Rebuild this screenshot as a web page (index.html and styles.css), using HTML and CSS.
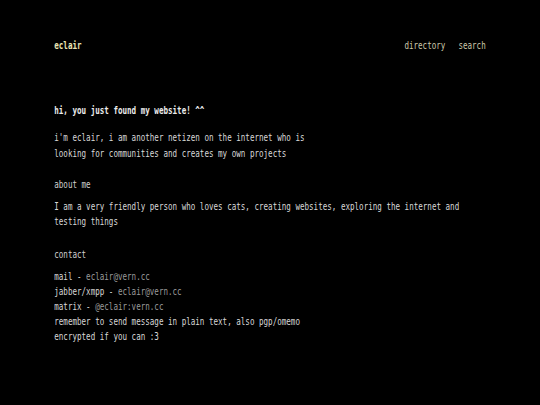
FILE: index.html
```html
<!DOCTYPE html>
<html lang="en">
<head>
<meta charset="utf-8">
<title>eclair</title>
<link rel="stylesheet" href="styles.css">
</head>
<body>
<div class="frame">
<div class="page">
  <header class="top">
    <span class="brand">eclair</span>
    <nav class="nav">
      <a href="#">directory</a>
      <a href="#">search</a>
    </nav>
  </header>
  <main class="main">
    <h1 class="title">hi, you just found my website! ^^</h1>
    <p class="intro">i'm eclair, i am another netizen on the internet who is looking for communities and creates my own projects</p>
    <h2 class="section">about me</h2>
    <p class="text">I am a very friendly person who loves cats, creating websites, exploring the internet and testing things</p>
    <h2 class="section section-contact">contact</h2>
    <div class="contact">
      <div>mail - <a href="#">eclair@vern.cc</a></div>
      <div>jabber/xmpp - <a href="#">eclair@vern.cc</a></div>
      <div>matrix - <a href="#">@eclair:vern.cc</a></div>
      <div>remember to send message in plain text, also pgp/omemo encrypted if you can :3</div>
    </div>
  </main>
</div>
</div>
</body>
</html>
```

FILE: styles.css
```css
html, body {
  margin: 0;
  padding: 0;
  background: #000;
  overflow: hidden;
}
.frame {
  width: 540px;
  height: 405px;
  overflow: hidden;
}
.page {
  width: 786px;
  box-sizing: border-box;
  padding: 38px 79px 0 79px;
  transform: scaleX(0.687);
  transform-origin: 0 0;
  font-family: "DejaVu Sans Mono", monospace;
  font-size: 11px;
  line-height: 15.2px;
  color: #d8d8d8;
}
.top {
  display: flex;
  justify-content: space-between;
  align-items: center;
}
.brand {
  color: #ebe6b4;
  font-weight: bold;
}
.nav {
  display: flex;
  gap: 19px;
}
.nav a {
  color: #cdc9aa;
  text-decoration: none;
}
.main {
  padding-top: 50px;
}
.title {
  margin: 0;
  font-size: 11px;
  line-height: 15.2px;
  font-weight: bold;
  color: #ececec;
}
.intro {
  margin: 12px 0 0 0;
  max-width: 60ch;
}
.section {
  margin: 16px 0 0 0;
  font-size: 11px;
  line-height: 15.2px;
  font-weight: normal;
  color: #d0d0d0;
}
.section-contact {
  margin-top: 18px;
}
.text {
  margin: 7px 0 0 0;
}
.contact {
  margin-top: 6px;
  max-width: 60ch;
}
.contact a {
  color: #9a9a9a;
  text-decoration: none;
}
```
